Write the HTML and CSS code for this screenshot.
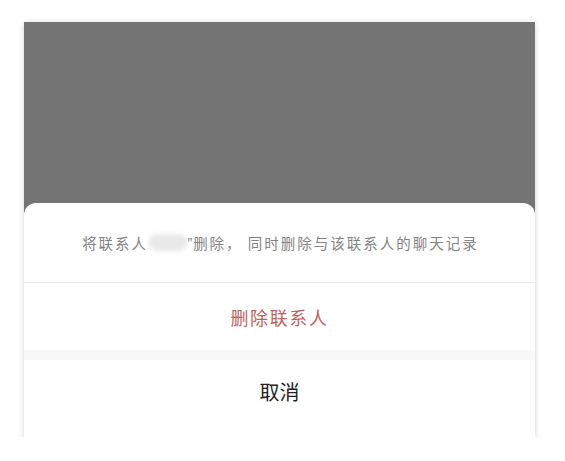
FILE: index.html
```html
<!DOCTYPE html>
<html lang="zh-CN">
<head>
<meta charset="utf-8">
<link rel="stylesheet" href="styles.css">
</head>
<body>
<div class="screen">
  <div class="mask"></div>
  <div class="sheet">
    <div class="message">将联系人<span class="blur-name"></span><span class="quote">”</span>删除， 同时删除与该联系人的聊天记录</div>
    <div class="action delete">删除联系人</div>
    <div class="gap"></div>
    <div class="action cancel">取消</div>
  </div>
</div>
</body>
</html>
```
FILE: styles.css
```css
html, body {
  margin: 0;
  padding: 0;
  background: #ffffff;
}
body {
  padding: 22px 0 0 24px;
  font-family: "Noto Sans CJK SC", "Noto Sans", sans-serif;
}
.screen {
  width: 511px;
  height: 415px;
  background: #747474;
  display: flex;
  flex-direction: column;
  box-shadow: 0 1px 6px rgba(0, 0, 0, 0.18);
}
.mask {
  height: 181px;
  flex: none;
}
.sheet {
  flex: 1;
  background: #ffffff;
  border-radius: 12px 12px 0 0;
  display: flex;
  flex-direction: column;
}
.message {
  height: 80px;
  display: flex;
  align-items: center;
  justify-content: center;
  padding-left: 2px;
  font-size: 14.5px;
  letter-spacing: 2px;
  color: #838383;
  border-bottom: 1px solid #ececec;
  box-sizing: border-box;
  white-space: pre;
}
.blur-name {
  display: inline-block;
  width: 38px;
  height: 17px;
  margin: 0 0 0 1px;
  background: #e9e9e9;
  border-radius: 8px;
  filter: blur(2px);
}
.quote {
  font-family: "Liberation Sans", sans-serif;
  font-size: 15px;
  letter-spacing: 1px;
}
.action {
  display: flex;
  align-items: center;
  justify-content: center;
}
.delete {
  height: 67px;
  font-size: 18px;
  letter-spacing: 1.6px;
  color: #c0605f;
}
.gap {
  height: 10px;
  background: #f8f8f8;
}
.cancel {
  height: 62px;
  margin-bottom: 14px;
  font-size: 20px;
  color: #222222;
}
```
